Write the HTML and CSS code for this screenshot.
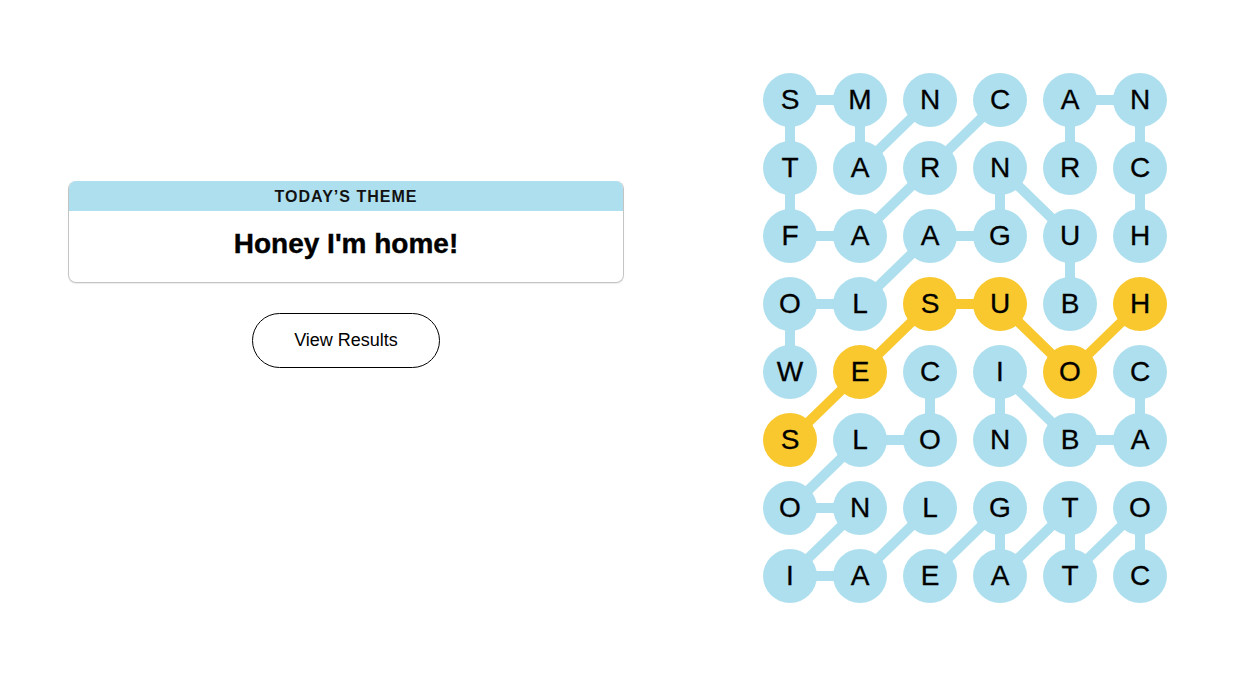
FILE: index.html
```html
<!DOCTYPE html>
<html lang="en">
<head>
  <meta charset="UTF-8" />
  <meta name="viewport" content="width=device-width, initial-scale=1.0"/>
  <title>Strands</title>
  <link rel="stylesheet" href="styles.css">
</head>
<body>

  <main class="game">
    <section class="panel">
      <div class="theme">
        <div class="theme-head">TODAY’S THEME</div>
        <div class="theme-body">Honey I'm home!</div>
      </div>
      <button class="results">View Results</button>
    </section>

    <section class="board">
      <!-- connectors between found letters -->
      <svg class="links" viewBox="0 0 404 530" width="404" height="530">
        <g class="found">
          <line x1="27" y1="27" x2="97" y2="27"/>
          <line x1="27" y1="27" x2="27" y2="95"/>
          <line x1="27" y1="95" x2="27" y2="163"/>
          <line x1="27" y1="163" x2="97" y2="163"/>
          <line x1="97" y1="27" x2="97" y2="95"/>
          <line x1="97" y1="95" x2="167" y2="27"/>
          <line x1="237" y1="27" x2="167" y2="95"/>
          <line x1="167" y1="95" x2="97" y2="163"/>
          <line x1="307" y1="27" x2="377" y2="27"/>
          <line x1="307" y1="27" x2="307" y2="95"/>
          <line x1="377" y1="27" x2="377" y2="95"/>
          <line x1="377" y1="95" x2="377" y2="163"/>
          <line x1="237" y1="95" x2="237" y2="163"/>
          <line x1="237" y1="95" x2="307" y2="163"/>
          <line x1="167" y1="163" x2="237" y2="163"/>
          <line x1="167" y1="163" x2="97" y2="231"/>
          <line x1="307" y1="163" x2="307" y2="231"/>
          <line x1="27" y1="231" x2="97" y2="231"/>
          <line x1="27" y1="231" x2="27" y2="299"/>
          <line x1="167" y1="299" x2="167" y2="367"/>
          <line x1="97" y1="367" x2="167" y2="367"/>
          <line x1="97" y1="367" x2="27" y2="435"/>
          <line x1="237" y1="299" x2="237" y2="367"/>
          <line x1="237" y1="299" x2="307" y2="367"/>
          <line x1="307" y1="367" x2="377" y2="367"/>
          <line x1="377" y1="299" x2="377" y2="367"/>
          <line x1="27" y1="435" x2="97" y2="435"/>
          <line x1="97" y1="435" x2="27" y2="503"/>
          <line x1="27" y1="503" x2="97" y2="503"/>
          <line x1="97" y1="503" x2="167" y2="435"/>
          <line x1="167" y1="503" x2="237" y2="435"/>
          <line x1="237" y1="435" x2="237" y2="503"/>
          <line x1="237" y1="503" x2="307" y2="435"/>
          <line x1="307" y1="435" x2="307" y2="503"/>
          <line x1="307" y1="503" x2="377" y2="435"/>
          <line x1="377" y1="435" x2="377" y2="503"/>
        </g>
        <g class="spangram">
          <line x1="167" y1="231" x2="237" y2="231"/>
          <line x1="237" y1="231" x2="307" y2="299"/>
          <line x1="307" y1="299" x2="377" y2="231"/>
          <line x1="167" y1="231" x2="97" y2="299"/>
          <line x1="97" y1="299" x2="27" y2="367"/>
        </g>
      </svg>

      <div class="grid">
        <span class="cell">S</span><span class="cell">M</span><span class="cell">N</span><span class="cell">C</span><span class="cell">A</span><span class="cell">N</span>
        <span class="cell">T</span><span class="cell">A</span><span class="cell">R</span><span class="cell">N</span><span class="cell">R</span><span class="cell">C</span>
        <span class="cell">F</span><span class="cell">A</span><span class="cell">A</span><span class="cell">G</span><span class="cell">U</span><span class="cell">H</span>
        <span class="cell">O</span><span class="cell">L</span><span class="cell span">S</span><span class="cell span">U</span><span class="cell">B</span><span class="cell span">H</span>
        <span class="cell">W</span><span class="cell span">E</span><span class="cell">C</span><span class="cell">I</span><span class="cell span">O</span><span class="cell">C</span>
        <span class="cell span">S</span><span class="cell">L</span><span class="cell">O</span><span class="cell">N</span><span class="cell">B</span><span class="cell">A</span>
        <span class="cell">O</span><span class="cell">N</span><span class="cell">L</span><span class="cell">G</span><span class="cell">T</span><span class="cell">O</span>
        <span class="cell">I</span><span class="cell">A</span><span class="cell">E</span><span class="cell">A</span><span class="cell">T</span><span class="cell">C</span>
      </div>
    </section>
  </main>

</body>
</html>
```

FILE: styles.css
```css
* {
  margin: 0;
  padding: 0;
  box-sizing: border-box;
}

body {
  font-family: 'Liberation Sans', Arial, sans-serif;
  background: #fff;
  color: #000;
}

.game {
  display: flex;
  align-items: flex-start;
  gap: 139px;
  padding: 73px 0 0 68px;
}

.panel {
  width: 556px;
  padding-top: 108px;
}

.theme {
  border: 1px solid #c4c4c4;
  border-top: none;
  border-radius: 8px;
  overflow: hidden;
  box-shadow: 0 1px 1px rgba(0,0,0,0.08);
}

.theme-head {
  background: #aedfee;
  height: 30px;
  line-height: 31px;
  text-align: center;
  font-size: 16px;
  font-weight: bold;
  letter-spacing: 1px;
  color: #121212;
}

.theme-body {
  height: 71px;
  padding-top: 15px;
  line-height: 36px;
  text-align: center;
  font-size: 28px;
  font-weight: bold;
  -webkit-text-stroke: 0.4px #000;
}

.results {
  display: block;
  margin: 30px auto 0;
  width: 188px;
  height: 55px;
  border: 1px solid #000;
  border-radius: 28px;
  background: #fff;
  font-family: inherit;
  font-size: 18px;
  color: #000;
  cursor: pointer;
}

.board {
  position: relative;
  width: 404px;
  height: 530px;
}

.links {
  position: absolute;
  left: 0;
  top: 0;
}

.links line {
  stroke-width: 10;
}

.found line {
  stroke: #aedfee;
}

.spangram line {
  stroke: #f8c82e;
}

.grid {
  position: relative;
  display: grid;
  grid-template-columns: repeat(6, 54px);
  grid-auto-rows: 54px;
  column-gap: 16px;
  row-gap: 14px;
}

.cell {
  display: flex;
  align-items: center;
  justify-content: center;
  border-radius: 50%;
  background: #aedfee;
  font-size: 28px;
  -webkit-text-stroke: 0.3px #000;
}

.cell.span {
  background: #f8c82e;
}
```
